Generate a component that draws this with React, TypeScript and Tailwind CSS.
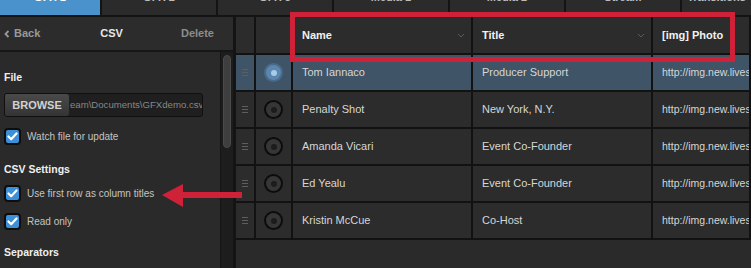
import React from "react";

const tabs = ["GFX 1", "GFX 2", "GFX 3", "Media 1", "Media 2", "Stream", "Transitions"];

const rows = [
  { name: "Tom Iannaco", title: "Producer Support", sel: true },
  { name: "Penalty Shot", title: "New York, N.Y.", sel: false },
  { name: "Amanda Vicari", title: "Event Co-Founder", sel: false },
  { name: "Ed Yealu", title: "Event Co-Founder", sel: false },
  { name: "Kristin McCue", title: "Co-Host", sel: false },
];

function Check({ label }: { label: string }) {
  return (
    <div className="flex items-center h-[17px] pl-[4px]">
      <div className="w-[17px] h-[17px] rounded-[4px] bg-[#0d0d0d] p-[2px] flex-none">
        <div className="w-full h-full rounded-[2px] bg-[#3d8fd8] flex items-center justify-center">
          <svg width="11" height="9" viewBox="0 0 11 9">
            <path d="M1.5 4.5 L4.2 7.2 L9.5 1.5" stroke="#fff" strokeWidth="2.2" fill="none" strokeLinecap="round" strokeLinejoin="round" />
          </svg>
        </div>
      </div>
      <span className="ml-[6px] text-[10px] leading-[14px] text-[#c4c4c4] whitespace-nowrap">{label}</span>
    </div>
  );
}

function Handle() {
  return (
    <div className="flex flex-col gap-[2px] items-center">
      <div className="w-[6px] h-[1px] bg-[#5e5e5e]" />
      <div className="w-[6px] h-[1px] bg-[#5e5e5e]" />
      <div className="w-[6px] h-[1px] bg-[#5e5e5e]" />
    </div>
  );
}

function Radio({ sel }: { sel: boolean }) {
  return sel ? (
    <div className="w-[19px] h-[19px] rounded-full bg-[#4a6a89] p-[2px]">
      <div className="w-full h-full rounded-full bg-[#5b87ae] flex items-center justify-center">
        <div className="w-[6px] h-[6px] rounded-full bg-[#a8cbea]" />
      </div>
    </div>
  ) : (
    <div className="w-[19px] h-[19px] rounded-full bg-[#0c0c0c] p-[2px]">
      <div className="w-full h-full rounded-full bg-[#363636] flex items-center justify-center">
        <div className="w-[6px] h-[6px] rounded-full bg-[#1c1c1c]" />
      </div>
    </div>
  );
}

export default function App() {
  return (
    <div className="w-[751px] h-[268px] overflow-hidden bg-[#141414] relative font-['Liberation_Sans',Arial,sans-serif]">
      {/* Tabs */}
      <div className="flex h-[17px] gap-[2px] pb-[2px] bg-[#141414]">
        {tabs.map((t, i) => (
          <div
            key={t}
            className={
              (i === 0
                ? "w-[100px] flex-none bg-[#4a92cc] text-white"
                : i === tabs.length - 1
                ? "flex-1 min-w-0 bg-[#2b2b2b] text-[#bdbdbd]"
                : "w-[114px] flex-none bg-[#2b2b2b] text-[#bdbdbd]") + " flex justify-center items-start overflow-hidden"
            }
          >
            <span className="-mt-[9px] text-[11px] leading-[12px] font-bold whitespace-nowrap">{t}</span>
          </div>
        ))}
      </div>

      <div className="flex h-[251px]">
        {/* Left panel */}
        <div className="w-[233px] flex-none flex flex-col bg-[#2a2a2a]">
          <div className="h-[35px] flex items-center justify-between px-[4px] bg-[#2c2c2c] border-b-2 border-[#161616] text-[11px] font-bold">
            <div className="flex items-center text-[#999] w-[70px]">
              <svg width="6" height="8" viewBox="0 0 6 8" className="mr-[4px]">
                <path d="M4.5 1 L1.5 4 L4.5 7" stroke="#999" strokeWidth="1.8" fill="none" />
              </svg>
              Back
            </div>
            <div className="text-[#e8e8e8]">CSV</div>
            <div className="text-[#8d8d8d] w-[80px] text-right pr-[15px]">Delete</div>
          </div>
          <div className="flex flex-1 min-h-0">
            <div className="w-[220px] flex-none flex flex-col">
              <div className="mt-[17px] h-[16px] pl-[4px] text-[10.5px] leading-[16px] font-bold text-[#efefef]">File</div>
              <div className="mt-[8px] ml-[4px] w-[199px] h-[24px] flex rounded-[3px] border border-[#101010] bg-[#1f1f1f] overflow-hidden">
                <div className="w-[64px] flex-none flex items-center justify-center bg-gradient-to-b from-[#4a4a4a] to-[#343434] rounded-r-[3px] text-[11px] font-bold text-[#d2d2d2]">
                  BROWSE
                </div>
                <div className="flex items-center pl-[1px] text-[9.6px] text-[#878787] whitespace-nowrap">eam\Documents\GFXdemo.csv</div>
              </div>
              <div className="mt-[11px]">
                <Check label="Watch file for update" />
              </div>
              <div className="mt-[16px] h-[16px] pl-[4px] text-[10.5px] leading-[16px] font-bold text-[#efefef]">CSV Settings</div>
              <div className="mt-[8px]">
                <Check label="Use first row as column titles" />
              </div>
              <div className="mt-[11px]">
                <Check label="Read only" />
              </div>
              <div className="mt-[14px] h-[16px] pl-[4px] text-[10.5px] leading-[16px] font-bold text-[#efefef]">Separators</div>
            </div>
            <div className="w-[13px] flex-none bg-[#1d1d1d] border-l border-[#151515] pt-[3px] flex justify-center">
              <div className="w-[8px] h-[93px] rounded-full bg-[#3e3e3e] border border-[#4a4a4a]" />
            </div>
          </div>
        </div>

        <div className="w-[3px] flex-none bg-[#141414]" />

        {/* Table */}
        <div className="flex-1 min-w-0 flex flex-col gap-[2px] bg-[#121212] pr-[2px]">
          <div className="flex gap-[2px] h-[36px] text-[11px] font-bold text-[#f2f2f2]">
            <div className="w-[18px] flex-none bg-[#2c2c2c]" />
            <div className="w-[35px] flex-none bg-[#2c2c2c]" />
            <div className="w-[178px] flex-none bg-[#2c2c2c] flex items-center justify-between pl-[9px] pr-[6px]">
              <span>Name</span>
              <svg width="8" height="5" viewBox="0 0 8 5"><path d="M1 1 L4 4 L7 1" stroke="#5a5a5a" strokeWidth="1" fill="none" /></svg>
            </div>
            <div className="w-[178px] flex-none bg-[#2c2c2c] flex items-center justify-between pl-[9px] pr-[6px]">
              <span>Title</span>
              <svg width="8" height="5" viewBox="0 0 8 5"><path d="M1 1 L4 4 L7 1" stroke="#5a5a5a" strokeWidth="1" fill="none" /></svg>
            </div>
            <div className="flex-1 min-w-0 bg-[#2c2c2c] flex items-center pl-[9px] whitespace-nowrap overflow-hidden">[img] Photo</div>
          </div>
          {rows.map((r) => {
            const bg = r.sel ? "bg-[#3f5467]" : "bg-[#2c2c2c]";
            return (
              <div key={r.name} className="flex gap-[2px] h-[35px] text-[11px] text-[#d6d6d6]">
                <div className={"w-[18px] flex-none flex items-center justify-center " + bg}>
                  <Handle />
                </div>
                <div className={"w-[35px] flex-none flex items-center justify-center " + bg}>
                  <Radio sel={r.sel} />
                </div>
                <div className={"w-[178px] flex-none flex items-center pl-[9px] " + bg}>{r.name}</div>
                <div className={"w-[178px] flex-none flex items-center pl-[9px] " + bg}>{r.title}</div>
                <div className={"flex-1 min-w-0 flex items-center pl-[9px] overflow-hidden whitespace-nowrap text-[10.5px] " + bg}>http://img.new.livestream.com</div>
              </div>
            );
          })}
          <div className="flex-1 bg-[#2a2a2a] -mr-[2px]" />
        </div>
      </div>

      {/* Annotation box */}
      <div className="absolute left-[290px] top-[12px] w-[445px] h-[50px] border-[5px] border-[#cf2238]" />

      {/* Annotation arrow */}
      <svg className="absolute left-[160px] top-[183px]" width="84" height="25" viewBox="0 0 84 25">
        <polygon points="2,12 23,1 23,24" fill="#cf2238" />
        <rect x="22" y="9" width="60" height="6" fill="#cf2238" />
      </svg>
    </div>
  );
}
